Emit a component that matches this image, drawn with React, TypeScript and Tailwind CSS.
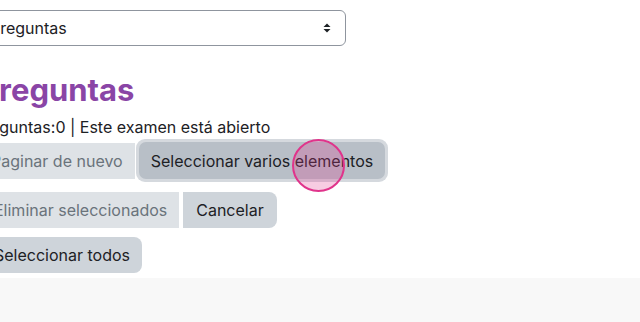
import React from "react";

export default function App() {
  const font = { fontFamily: "Inter, 'Noto Sans', sans-serif" };
  return (
    <div className="relative w-[640px] h-[322px] bg-white overflow-hidden text-[#1d2125]" style={font}>
      <div className="flex flex-col items-start h-[278px] pt-[10px]">
        <div className="ml-[-23px] w-[369px] h-[36px] border border-[#8f959e] rounded-[6px] flex items-center justify-between pl-[12px] pr-[12px] text-[16px]">
          <span>Preguntas</span>
          <svg width="10" height="14" viewBox="0 0 10 14" className="mr-[1px]">
            <path d="M1.5 6 L5 2.5 L8.5 6 Z" fill="#1d2125" />
            <path d="M1.5 8 L5 11.5 L8.5 8 Z" fill="#1d2125" />
          </svg>
        </div>
        <h2 className="ml-[-21px] mt-[26px] text-[31px] leading-[36px] font-bold text-[#8a45a6]">Preguntas</h2>
        <div className="ml-[-26px] mt-[9px] text-[16px] leading-[20px]">Preguntas:0 | Este examen está abierto</div>
        <div className="mt-[2px] flex items-center ml-[-21px]">
          <div className="h-[36px] px-[12px] flex items-center bg-[#dee2e6] text-[#6a737b] text-[16px] rounded-l-[8px]">Paginar de nuevo</div>
          <div className="ml-[1px] p-[3px] rounded-[9px] bg-[#d5d9de]">
            <div className="h-[37px] px-[12px] flex items-center bg-[#b8bfc7] text-[16px] rounded-[7px] text-[#1d2125]">Seleccionar varios elementos</div>
          </div>
        </div>
        <div className="mt-[10px] flex items-center ml-[-18px]">
          <div className="h-[36px] px-[12px] flex items-center bg-[#dee2e6] text-[#6a737b] text-[16px]">Eliminar seleccionados</div>
          <div className="ml-[4px] h-[36px] px-[13px] flex items-center bg-[#ced4da] text-[16px] rounded-r-[8px]">Cancelar</div>
        </div>
        <div className="mt-[9px] flex items-center ml-[-18px]">
          <div className="h-[36px] px-[12px] flex items-center bg-[#ced4da] text-[16px] rounded-r-[8px]">Seleccionar todos</div>
        </div>
      </div>
      <div className="h-[44px] bg-[#f8f8f8]" />
      <div className="absolute left-[292px] top-[139px] w-[53px] h-[53px] rounded-full border-2 border-[#e0348b] bg-[#e0348b]/25" />
    </div>
  );
}
